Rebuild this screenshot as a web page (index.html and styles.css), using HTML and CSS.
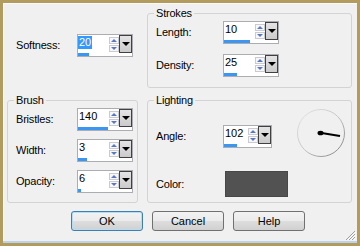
FILE: index.html
```html
<!DOCTYPE html>
<html>
<head>
<meta charset="utf-8">
<link rel="stylesheet" href="styles.css">
</head>
<body>
<div class="dlg">
  <div class="main">
    <div class="soft">
      <div class="row">
        <span class="lbl">Softness:</span>
        <div class="spin">
          <div class="spin-top">
            <div class="val"><span class="sel">20</span></div>
            <div class="arrows"><div class="ar"><i class="up"></i></div><div class="ar"><i class="down"></i></div></div>
            <div class="dd"><i></i></div>
          </div>
          <div class="bar-row"><div class="bar" style="width:11px"></div></div>
        </div>
      </div>
    </div>

    <fieldset class="grp grp-r">
      <legend>Strokes</legend>
      <div class="rows rows-strokes">
        <div class="row">
          <span class="lbl">Length:</span>
          <div class="spin">
            <div class="spin-top">
              <div class="val"><span>10</span></div>
              <div class="arrows"><div class="ar"><i class="up"></i></div><div class="ar"><i class="down"></i></div></div>
              <div class="dd"><i></i></div>
            </div>
            <div class="bar-row"><div class="bar" style="width:26px"></div></div>
          </div>
        </div>
        <div class="row">
          <span class="lbl">Density:</span>
          <div class="spin">
            <div class="spin-top">
              <div class="val"><span>25</span></div>
              <div class="arrows"><div class="ar"><i class="up"></i></div><div class="ar"><i class="down"></i></div></div>
              <div class="dd"><i></i></div>
            </div>
            <div class="bar-row"><div class="bar" style="width:13px"></div></div>
          </div>
        </div>
      </div>
    </fieldset>

    <fieldset class="grp grp-l">
      <legend>Brush</legend>
      <div class="rows rows-brush">
        <div class="row">
          <span class="lbl">Bristles:</span>
          <div class="spin">
            <div class="spin-top">
              <div class="val"><span>140</span></div>
              <div class="arrows"><div class="ar"><i class="up"></i></div><div class="ar"><i class="down"></i></div></div>
              <div class="dd"><i></i></div>
            </div>
            <div class="bar-row"><div class="bar" style="width:30px"></div></div>
          </div>
        </div>
        <div class="row">
          <span class="lbl">Width:</span>
          <div class="spin">
            <div class="spin-top">
              <div class="val"><span>3</span></div>
              <div class="arrows"><div class="ar"><i class="up"></i></div><div class="ar"><i class="down"></i></div></div>
              <div class="dd"><i></i></div>
            </div>
            <div class="bar-row"><div class="bar" style="width:9px"></div></div>
          </div>
        </div>
        <div class="row">
          <span class="lbl">Opacity:</span>
          <div class="spin">
            <div class="spin-top">
              <div class="val"><span>6</span></div>
              <div class="arrows"><div class="ar"><i class="up"></i></div><div class="ar"><i class="down"></i></div></div>
              <div class="dd"><i></i></div>
            </div>
            <div class="bar-row"><div class="bar" style="width:3px"></div></div>
          </div>
        </div>
      </div>
    </fieldset>

    <fieldset class="grp grp-r">
      <legend>Lighting</legend>
      <div class="light">
        <span class="lbl angle-lbl">Angle:</span>
        <div class="spin spin-narrow angle-spin">
          <div class="spin-top">
            <div class="val"><span>102</span></div>
            <div class="arrows"><div class="ar"><i class="up"></i></div><div class="ar"><i class="down"></i></div></div>
            <div class="dd"><i></i></div>
          </div>
          <div class="bar-row"><div class="bar" style="width:13px"></div></div>
        </div>
        <svg class="dial" width="48" height="48" viewBox="0 0 48 48">
          <defs>
            <linearGradient id="rg" x1="0" y1="0" x2="1" y2="1">
              <stop offset="0" stop-color="#e6e6e6"/>
              <stop offset="0.5" stop-color="#c4c4c4"/>
              <stop offset="1" stop-color="#7c7c7c"/>
            </linearGradient>
          </defs>
          <circle cx="24" cy="24" r="23.5" fill="none" stroke="url(#rg)" stroke-width="1"/>
          <line x1="23" y1="23.8" x2="43" y2="27" stroke="#000" stroke-width="2"/>
          <ellipse cx="23.5" cy="24" rx="3" ry="2.3" fill="#000"/>
        </svg>
        <span class="lbl color-lbl">Color:</span>
        <div class="swatch"></div>
      </div>
    </fieldset>
  </div>

  <div class="buttons">
    <button class="btn def">OK</button>
    <button class="btn">Cancel</button>
    <button class="btn">Help</button>
  </div>

  <div class="status"></div>

  <svg class="grip" width="12" height="10" viewBox="0 0 12 10">
    <path d="M11 1 L2 10 M11 4 L5 10 M11 7 L8 10" stroke="#a0a0a0" stroke-width="1" fill="none"/>
    <path d="M12 2 L4 10 M12 5 L7 10 M12 8 L10 10" stroke="#ffffff" stroke-width="1" fill="none"/>
  </svg>
</div>
</body>
</html>
```

FILE: styles.css
```css
html, body {
  margin: 0;
  padding: 0;
  background: #f0f0f0;
}

.dlg {
  position: relative;
  width: 360px;
  height: 246px;
  box-sizing: border-box;
  border: 3px solid #b39b5d;
  background: #f0f0f0;
  box-shadow: inset 1px 1px 0 #fbfbfb;
  display: flex;
  flex-direction: column;
  font-family: "Liberation Sans", Arial, sans-serif;
  font-size: 11px;
  letter-spacing: -0.2px;
  color: #000;
}

.main {
  display: grid;
  grid-template-columns: 131px 205px;
  grid-template-rows: 81px 109px;
  column-gap: 9px;
  row-gap: 6px;
  padding: 4px 5px 0 4px;
}

.soft {
  padding: 27px 0 0 9px;
}

.row {
  display: flex;
  align-items: center;
}

.lbl {
  display: block;
  line-height: 13px;
  white-space: nowrap;
}

.soft .lbl, .grp-l .lbl {
  width: 61px;
  flex: none;
}

.grp-r .lbl {
  width: 67px;
  flex: none;
}

.grp {
  margin: 0;
  min-width: 0;
  width: 100%;
  box-sizing: border-box;
  padding: 1px 8px 0 8px;
  border: 1px solid #d3d3d3;
  border-radius: 3px;
}

.grp-l {
  padding-right: 2px;
}

.grp legend {
  padding: 0 2px;
  margin-left: -2px;
  line-height: 13px;
  font-size: 11px;
}

.rows {
  display: flex;
  flex-direction: column;
}

.rows-strokes { gap: 10px; }
.rows-brush { gap: 8px; }

/* spin control */
.spin {
  width: 56px;
  height: 23px;
  box-sizing: border-box;
  border: 1px solid #abadb3;
  background: #fff;
  display: flex;
  flex-direction: column;
  flex: none;
}

.spin-narrow {
  width: 49px;
}

.spin-top {
  display: flex;
  height: 18px;
}

.val {
  flex: 1;
  display: flex;
  align-items: flex-start;
  min-width: 0;
}

.val span {
  display: inline-block;
  margin-top: 1px;
  padding: 0 1px;
  line-height: 13px;
  letter-spacing: 0;
}

.val .sel {
  background: #3399ff;
  color: #fff;
}

.arrows {
  width: 10px;
  display: flex;
  flex-direction: column;
  justify-content: center;
  gap: 1px;
}

.ar {
  height: 7px;
  box-sizing: border-box;
  border: 1px solid #c9cbd0;
  background: #f7f7f7;
  display: flex;
  align-items: center;
  justify-content: center;
}

.ar i {
  display: block;
  width: 0;
  height: 0;
  border-left: 3px solid transparent;
  border-right: 3px solid transparent;
}

.ar .up { border-bottom: 3px solid #5a78c2; }
.ar .down { border-top: 3px solid #5a78c2; }

.dd {
  width: 13px;
  box-sizing: border-box;
  border: 1px solid #404040;
  background: linear-gradient(#e4e4e4, #cbcbcb);
  display: flex;
  align-items: center;
  justify-content: center;
}

.dd i {
  display: block;
  width: 0;
  height: 0;
  border-left: 4px solid transparent;
  border-right: 4px solid transparent;
  border-top: 4px solid #000;
}

.bar-row {
  height: 3px;
}

.bar {
  height: 3px;
  background: #3a96f0;
}

/* lighting */
.light {
  display: grid;
  grid-template-columns: 67px 49px auto;
  grid-template-rows: 52px 26px;
  row-gap: 11px;
}

.angle-lbl {
  grid-column: 1;
  grid-row: 1;
  align-self: start;
  margin-top: 17px;
  line-height: 23px;
}

.angle-spin {
  grid-column: 2;
  grid-row: 1;
  align-self: start;
  margin-top: 17px;
}

.dial {
  grid-column: 3;
  grid-row: 1;
  margin: 1px 0 0 25px;
  display: block;
}

.color-lbl {
  grid-column: 1;
  grid-row: 2;
  align-self: center;
}

.swatch {
  grid-column: 2 / span 2;
  grid-row: 2;
  margin-left: 2px;
  width: 63px;
  height: 26px;
  box-sizing: border-box;
  background: #525252;
  border: 1px solid #474747;
}

/* buttons */
.buttons {
  display: flex;
  gap: 9px;
  margin-top: 8px;
  padding-left: 68px;
}

.btn {
  width: 72px;
  height: 20px;
  box-sizing: border-box;
  padding: 0;
  border: 1px solid #707070;
  border-radius: 3px;
  background: linear-gradient(#f2f2f2 0%, #ebebeb 48%, #dddddd 52%, #d0d0d0 100%);
  font-family: "Liberation Sans", Arial, sans-serif;
  font-size: 11px;
  color: #000;
}

.btn.def {
  border-color: #3c7fb1;
  box-shadow: inset 0 0 0 1px #b5def5;
}

.status {
  margin-top: auto;
  height: 2px;
  background: #bcd3ee;
}

.grip {
  position: absolute;
  right: 1px;
  bottom: 3px;
}
```
